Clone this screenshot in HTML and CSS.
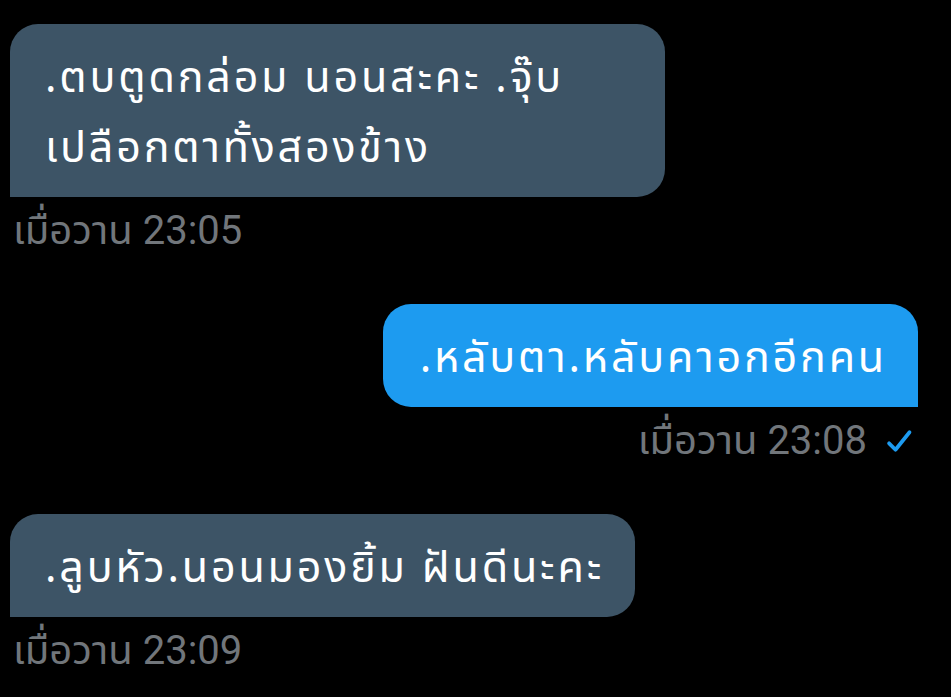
FILE: index.html
```html
<!DOCTYPE html>
<html lang="th">
<head>
<meta charset="utf-8">
<link rel="stylesheet" href="styles.css">
</head>
<body>
<div class="chat">
  <div class="msg in">
    <div class="bubble full">.ตบตูดกล่อม นอนสะคะ .จุ๊บ<br>เปลือกตาทั้งสองข้าง</div>
    <div class="meta">เมื่อวาน 23:05</div>
  </div>
  <div class="msg out">
    <div class="bubble">.หลับตา.หลับคาอกอีกคน</div>
    <div class="meta">เมื่อวาน 23:08 <svg class="check" viewBox="0 0 24 24" width="28" height="28"><path d="M3.5 14l5.5 5.5L21 4.5" fill="none" stroke="#1d9bf0" stroke-width="3.2" stroke-linecap="round" stroke-linejoin="round"/></svg></div>
  </div>
  <div class="msg in">
    <div class="bubble">.ลูบหัว.นอนมองยิ้ม ฝันดีนะคะ</div>
    <div class="meta">เมื่อวาน 23:09</div>
  </div>
</div>
</body>
</html>
```
FILE: styles.css
```css
html, body {
  margin: 0;
  padding: 0;
  background: #000;
}
body {
  width: 951px;
  height: 697px;
  overflow: hidden;
  font-family: "Noto Sans", "Noto Sans Thai", Roboto, sans-serif;
}
.chat {
  display: flex;
  flex-direction: column;
  padding: 24px 33px 0 10px;
}
.msg {
  display: flex;
  flex-direction: column;
  margin-bottom: 49px;
}
.msg.in { align-items: flex-start; }
.msg.out { align-items: flex-end; }
.bubble {
  box-sizing: border-box;
  max-width: 655px;
  color: #fff;
  font-size: 43px;
  letter-spacing: 2.8px;
  line-height: 70px;
  padding: 17px 31px 16px 35px;
  border-radius: 28px;
}
.bubble.full { width: 655px; }
.in .bubble {
  background: #3d5466;
  border-bottom-left-radius: 0;
}
.out .bubble {
  background: #1d9bf0;
  border-bottom-right-radius: 0;
  padding-left: 37px;
}
.meta {
  color: #71767b;
  font-family: Roboto, "Noto Sans", "Noto Sans Thai", sans-serif;
  font-size: 40px;
  line-height: 48px;
  margin-top: 10px;
  padding-left: 3px;
  display: flex;
  align-items: center;
  gap: 18px;
}
.check { margin-right: 5px; }
```
